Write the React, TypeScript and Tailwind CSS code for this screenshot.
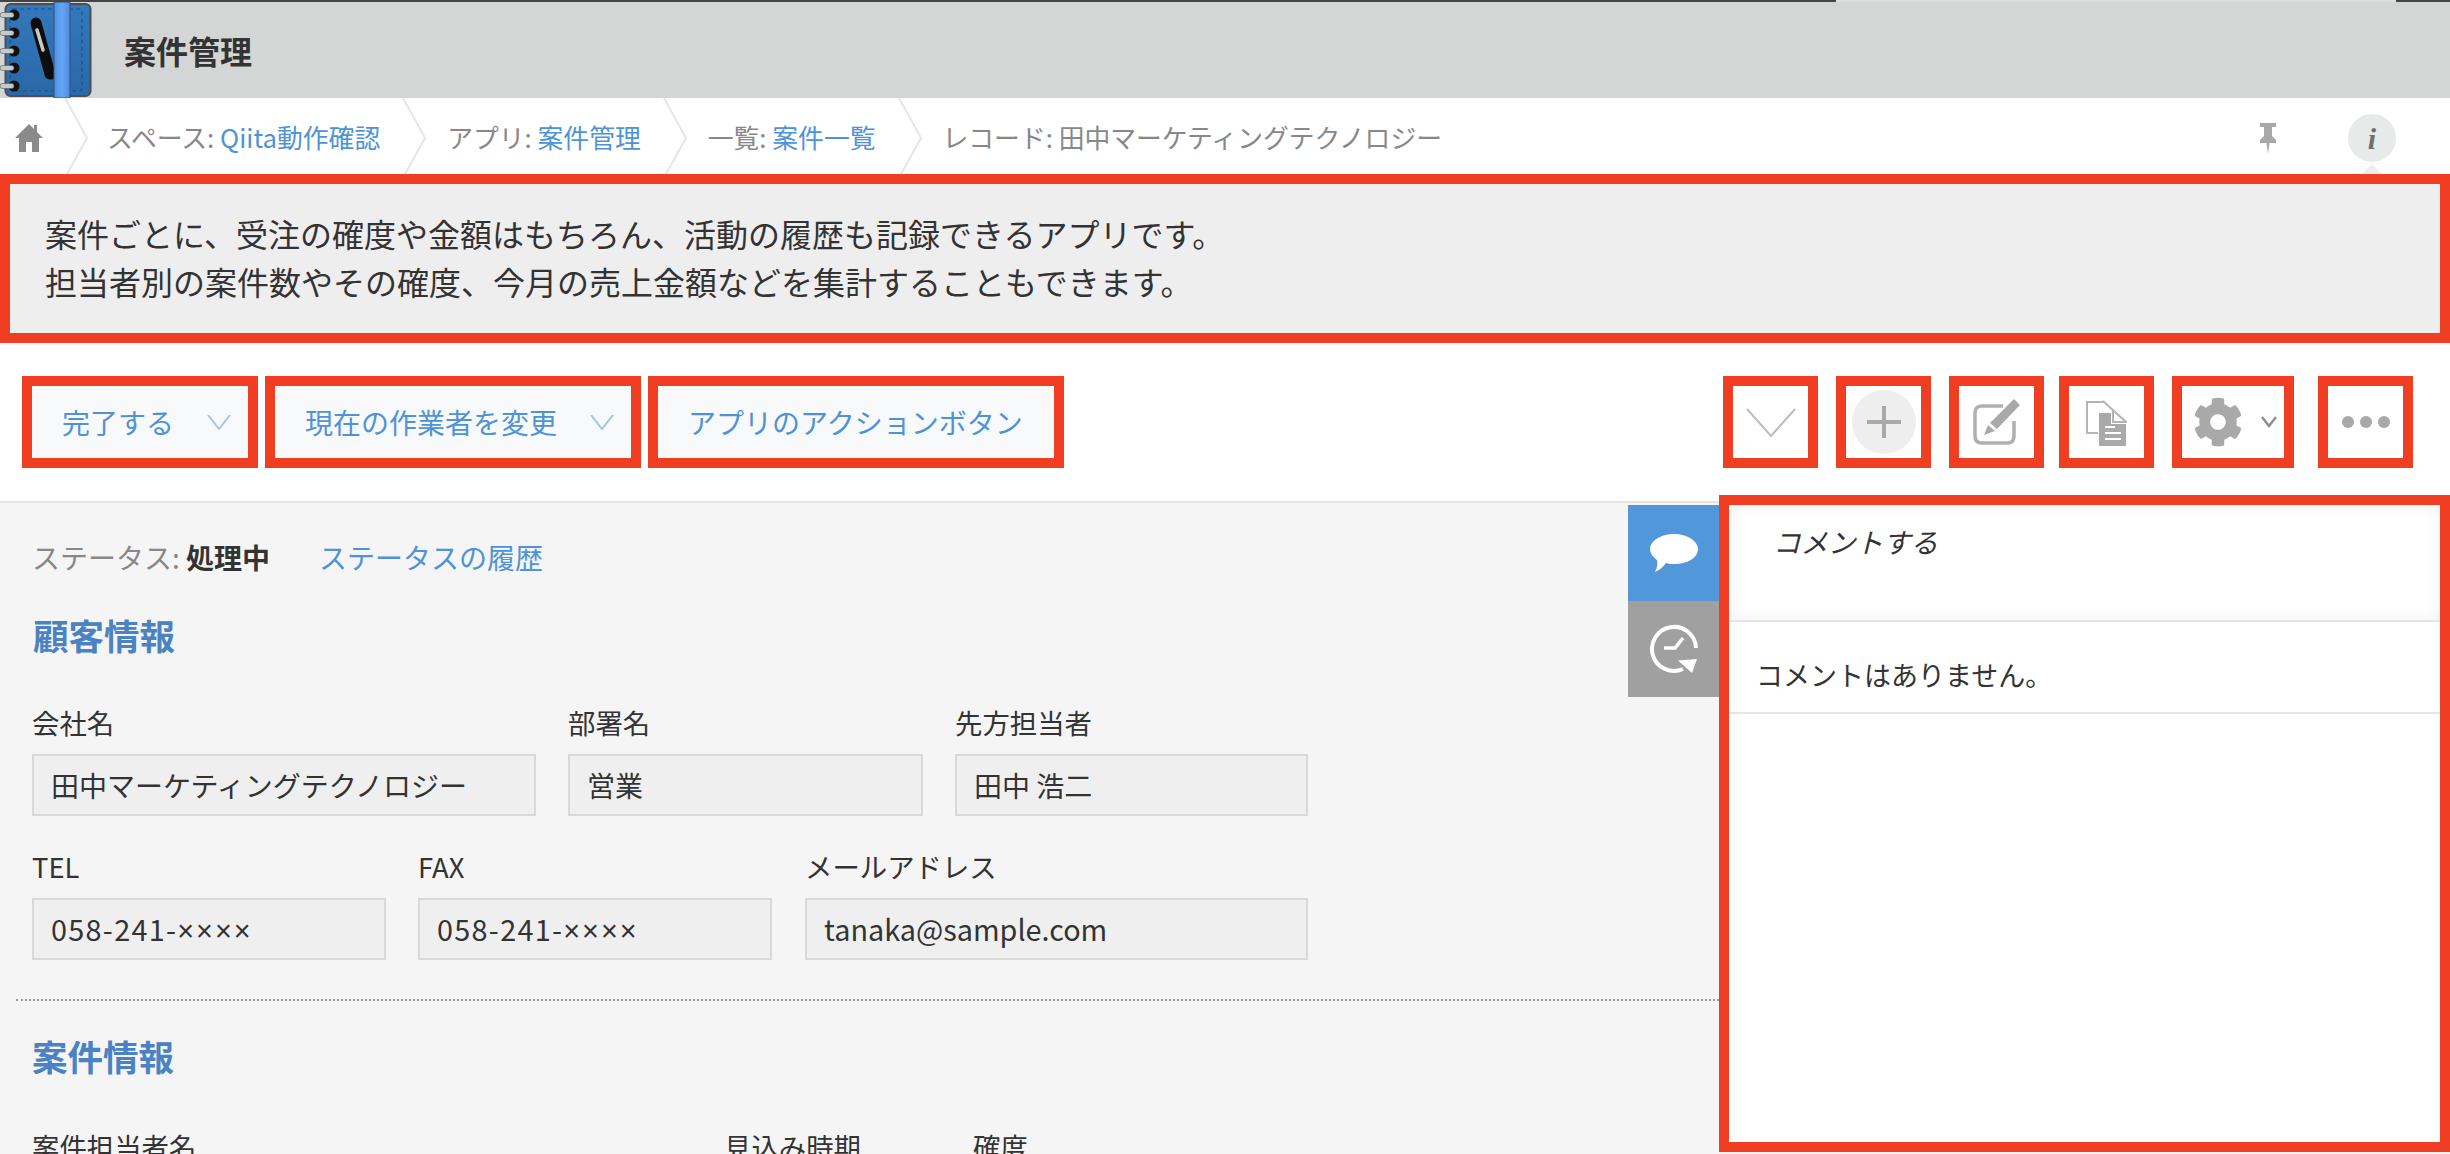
import React from "react";
import { FaCog } from "react-icons/fa";

// App logo: spiral notebook with a pen
const NotebookLogo = () => (
  <svg width="92" height="96" viewBox="0 0 92 96" className="shrink-0">
    <defs>
      <linearGradient id="cover" x1="0" y1="0" x2="0" y2="1">
        <stop offset="0" stopColor="#3379bd" />
        <stop offset="1" stopColor="#2a68a8" />
      </linearGradient>
      <linearGradient id="band" x1="0" y1="0" x2="1" y2="0">
        <stop offset="0" stopColor="#4b8fe6" />
        <stop offset="0.5" stopColor="#67a6f5" />
        <stop offset="1" stopColor="#4b8ae0" />
      </linearGradient>
    </defs>
    <rect x="5.5" y="2" width="85" height="92" rx="5" fill="url(#cover)" stroke="#4a4f55" strokeWidth="2" />
    <rect x="10" y="7" width="72" height="82" rx="3" fill="none" stroke="#1d4f85" strokeWidth="1.2" strokeDasharray="4 3" />
    {[13, 31, 49, 66, 84].map((y) => (
      <g key={y}>
        <circle cx="14" cy={y} r="5.5" fill="#111" />
        <rect x="0" y={y - 2.5} width="14" height="5" rx="2.5" fill="#c7c9cc" stroke="#555" strokeWidth="0.6" />
      </g>
    ))}
    <path d="M36 21 L50 72" stroke="#0d0d0d" strokeWidth="11" strokeLinecap="round" />
    <path d="M37 28 L43 48" stroke="#c9c9c9" strokeWidth="3.5" strokeLinecap="round" />
    <path d="M49 72 L53 78 L54 70 Z" fill="#0d0d0d" />
    <rect x="54" y="0" width="16" height="96" fill="url(#band)" stroke="#3a4f70" strokeWidth="1" />
  </svg>
);

const HomeIcon = () => (
  <svg width="28" height="28" viewBox="0 0 28 28" fill="#8a8a8a">
    <path d="M14 0 L19 5 V1 H22 V8 L28 14 H24 V28 H17 V18 H11 V28 H4 V14 H0 Z" />
  </svg>
);

const Crumb = () => (
  <svg width="24" height="76" viewBox="0 0 24 76" className="mx-[22px] shrink-0" fill="none" stroke="#e4e6e7" strokeWidth="2">
    <path d="M1 0 L23 40 L3 76" />
  </svg>
);

const PinIcon = () => (
  <svg width="16" height="31" viewBox="0 0 16 31" fill="#a8a8a8">
    <path d="M0 0 H16 V4 H12 V13 L16 17 V20 H9.5 L8 31 L6.5 20 H0 V17 L4 13 V4 H0 Z" />
  </svg>
);

const Chevron = ({ className }: { className: string }) => (
  <svg viewBox="0 0 24 15" width="24" height="15" fill="none" strokeWidth="2" className={className}>
    <path d="M1 0 L12 14 L23 0" />
  </svg>
);

const EditIcon = () => (
  <svg width="48" height="47" viewBox="0 0 48 47" fill="none">
    <path d="M30 7 H9 Q2 7 2 14 V37 Q2 44 9 44 H34 Q41 44 41 37 V22" stroke="#b0b0b0" strokeWidth="3.5" />
    <path d="M41 0 L47 6 L24 30 L17 24 Z" fill="#a9a9a9" />
    <path d="M15 26 L22 32 L11 36 Z" fill="#a9a9a9" />
  </svg>
);

const DocIcon = () => (
  <svg width="41" height="47" viewBox="0 0 41 47" fill="none">
    <path d="M17 3 H1 V34 H12" stroke="#b4b4b4" strokeWidth="2" />
    <path d="M17 2 L40 23 H27 V10" stroke="#b4b4b4" strokeWidth="2" />
    <path d="M13 14 H25 V25 H40 V47 H13 Z" fill="#a9a9a9" />
    <path d="M19 28 H29 M19 34 H35 M19 40 H35" stroke="#fff" strokeWidth="2" />
  </svg>
);

const BubbleIcon = () => (
  <svg width="48" height="38" viewBox="0 0 48 38" fill="#fff">
    <path d="M24 0 C37 0 48 7 48 15 C48 24 37 30 24 30 C21 30 19 30 16 29 C13 33 10 36 5 38 C7 34 8 30 7 26 C3 23 0 19 0 15 C0 7 11 0 24 0 Z" />
  </svg>
);

const HistoryIcon = () => (
  <svg width="48" height="50" viewBox="0 0 48 50" fill="none" stroke="#fff">
    <path d="M33 45 A22 22 0 1 1 46 24" strokeWidth="4" />
    <path d="M28 36.5 L47 35 L42 49 Z" fill="#fff" stroke="none" />
    <path d="M14 24 H25 L33 14" strokeWidth="3.5" />
  </svg>
);

const FormField = ({ label, width, className = "", valueClass = "text-[28px]", children }: { label: string; width: string; className?: string; valueClass?: string; children: React.ReactNode }) => (
  <div className={`${width} ${className} shrink-0`}>
    <div className="text-[27.4px] leading-[40px] text-[#333]">{label}</div>
    <div className={`mt-[12px] h-[62px] border-2 border-[#d9d9d9] bg-[#efefef] pl-[17px] leading-[58px] text-[#333] ${valueClass}`}>
      {children}
    </div>
  </div>
);

// phone numbers are masked with multiplication signs
const Phone = () => (
  <>
    <span className="tracking-[1.3px]">058-241-</span>
    <span className="font-['Liberation_Sans',sans-serif] tracking-[2px]">××××</span>
  </>
);

const ActionButton = ({ label, caret }: { label: string; caret?: boolean }) => (
  <div className="flex h-[92px] items-center border-10 border-[#ef3e22] bg-[#f7f9fb] text-[28px] text-[#4f93d6]">
    <span className="ml-[30px]">{label}</span>
    {caret ? <Chevron className="ml-[33px] mr-[17px] stroke-[#a3c6e8]" /> : <span className="mr-[31px]" />}
  </div>
);

const IconBox = ({ children, className = "" }: { children: React.ReactNode; className?: string }) => (
  <div className={`flex h-[92px] w-[95px] items-center justify-center border-10 border-[#ef3e22] bg-white ${className}`}>{children}</div>
);

const App = () => {
  return (
    <div className="flex h-[1154px] w-[2450px] flex-col overflow-hidden bg-[#f5f5f5] font-['Noto_Sans_CJK_JP','Noto_Sans',sans-serif]">
      {/* window strip */}
      <div className="flex h-[2px] shrink-0 bg-[#444]">
        <div className="ml-[1836px] w-[560px] bg-[#ddd]" />
      </div>
      {/* header */}
      <div className="flex h-[96px] shrink-0 items-center bg-[#d4d6d5]">
        <NotebookLogo />
        <h1 className="ml-[32px] text-[32px] font-bold text-[#333]">案件管理</h1>
      </div>
      {/* breadcrumb */}
      <div className="flex h-[76px] shrink-0 items-center bg-white text-[25.8px] text-[#888]">
        <div className="ml-[15px] mr-[-1px] mt-[4px]">
          <HomeIcon />
        </div>
        <Crumb />
        <span className="-ml-[3px] pt-[3px]">
          スペース: <a className="text-[#4f93d6]">Qiita動作確認</a>
        </span>
        <Crumb />
        <span className="-ml-px pt-[3px]">
          アプリ: <a className="text-[#4f93d6]">案件管理</a>
        </span>
        <Crumb />
        <span className="-ml-px pt-[3px]">
          一覧: <a className="text-[#4f93d6]">案件一覧</a>
        </span>
        <Crumb />
        <span className="-ml-px pt-[3px]">レコード: 田中マーケティングテクノロジー</span>
        <div className="ml-auto mr-[54px] mt-[4px] flex items-center">
          <PinIcon />
          <div className="relative ml-[72px] flex h-[48px] w-[48px] items-center justify-center rounded-full bg-[#e8e9e9] font-['Liberation_Serif',serif] text-[30px] font-bold italic text-[#6f6f6f]">
            i
            <div className="absolute left-[14px] top-[50px] h-0 w-0 border-x-[10px] border-b-[10px] border-x-transparent border-b-[#ecedee]" />
          </div>
        </div>
      </div>
      {/* app description */}
      <div className="h-[169px] shrink-0 border-10 border-[#ef3e22] bg-[#eeeeef] pl-[35px] pt-[25px] text-[32px] leading-[48px] text-[#333]">
        <p>案件ごとに、受注の確度や金額はもちろん、活動の履歴も記録できるアプリです。</p>
        <p>担当者別の案件数やその確度、今月の売上金額などを集計することもできます。</p>
      </div>
      {/* toolbar */}
      <div className="flex h-[160px] shrink-0 items-start border-b-2 border-[#e3e5e6] bg-white pt-[33px]">
        <div className="ml-[22px] flex gap-[7px]">
          <ActionButton label="完了する" caret />
          <ActionButton label="現在の作業者を変更" caret />
          <ActionButton label="アプリのアクションボタン" />
        </div>
        <div className="ml-auto mr-[37px] flex">
          <IconBox>
            <svg width="50" height="29" viewBox="0 0 50 29" fill="none" stroke="#bdbdbd" strokeWidth="2">
              <path d="M1 1 L25 28 L49 1" />
            </svg>
          </IconBox>
          <IconBox className="ml-[18px]">
            <div className="flex h-[64px] w-[64px] items-center justify-center rounded-full bg-[#eeeeee]">
              <svg width="34" height="32" viewBox="0 0 34 32" fill="none" stroke="#a9a9a9" strokeWidth="4">
                <path d="M0 16 H34 M17 0 V32" />
              </svg>
            </div>
          </IconBox>
          <IconBox className="ml-[18px]">
            <EditIcon />
          </IconBox>
          <IconBox className="ml-[15px]">
            <DocIcon />
          </IconBox>
          <IconBox className="ml-[18px] w-[122px] justify-start pl-[11px]">
            <FaCog size={50} color="#a9a9a9" />
            <svg width="16" height="12" viewBox="0 0 16 12" fill="none" stroke="#8f8f8f" strokeWidth="2.5" className="ml-[18px]">
              <path d="M1 1 L8 10 L15 1" />
            </svg>
          </IconBox>
          <IconBox className="ml-[24px] gap-[6px]">
            <span className="h-[12px] w-[12px] rounded-full bg-[#a9a9a9]" />
            <span className="h-[12px] w-[12px] rounded-full bg-[#a9a9a9]" />
            <span className="h-[12px] w-[12px] rounded-full bg-[#a9a9a9]" />
          </IconBox>
        </div>
      </div>
      {/* record body */}
      <div className="flex min-h-0 flex-1">
        <div className="relative w-[1719px] shrink-0">
          <div className="pl-[33px] pt-[34px]">
            <div className="-ml-px text-[28px] leading-[40px] text-[#888]">
              ステータス: <span className="font-bold text-[#333]">処理中</span>
              <a className="ml-[49px] text-[#4f93d6]">ステータスの履歴</a>
            </div>
            <h2 className="mt-[32px] text-[35.5px] font-bold leading-[52px] text-[#4a82c3]">顧客情報</h2>
            <div className="mt-[41px] flex">
              <FormField label="会社名" width="w-[504px]" className="-ml-px">田中マーケティングテクノロジー</FormField>
              <FormField label="部署名" width="w-[355px]" className="ml-[32px]">営業</FormField>
              <FormField label="先方担当者" width="w-[353px]" className="ml-[32px]">田中 浩二</FormField>
            </div>
            <div className="mt-[30px] flex">
              <FormField label="TEL" width="w-[354px]" className="-ml-px" valueClass="text-[28.8px]"><Phone /></FormField>
              <FormField label="FAX" width="w-[354px]" className="ml-[32px]" valueClass="text-[28.8px]"><Phone /></FormField>
              <FormField label="メールアドレス" width="w-[503px]" className="ml-[33px]" valueClass="text-[28.8px]">tanaka@sample.com</FormField>
            </div>
          </div>
          <div className="ml-[16px] mt-[39px] border-t-2 border-dotted border-[#999]" />
          <div className="pl-[32px]">
            <h2 className="mt-[29px] text-[35.5px] font-bold leading-[52px] text-[#4a82c3]">案件情報</h2>
            <div className="mt-[44px] flex text-[27.4px] leading-[40px] text-[#333]">
              <span className="w-[692px]">案件担当者名</span>
              <span className="w-[249px]">見込み時期</span>
              <span>確度</span>
            </div>
          </div>
          {/* side tabs */}
          <div className="absolute right-0 top-[2px] w-[91px]">
            <div className="flex h-[96px] items-center justify-center bg-[#5297da]">
              <BubbleIcon />
            </div>
            <div className="flex h-[96px] items-center justify-center bg-[#a0a0a0]">
              <HistoryIcon />
            </div>
          </div>
        </div>
        {/* comments */}
        <div className="relative -mt-[8px] h-[657px] w-[731px] shrink-0 border-10 border-[#ef3e22] bg-white">
          <div className="h-[117px] border-b-2 border-[#e3e5e6] pl-[44px] pt-[16px] text-[27.5px] italic leading-[40px] text-[#333] shadow-[inset_0_0_16px_#eff0f0]">
            コメントする
          </div>
          <div className="flex h-[92px] items-center border-b-2 border-[#e3e5e6] pl-[27px] pt-[16px] text-[27px] text-[#333]">
            コメントはありません。
          </div>
        </div>
      </div>
    </div>
  );
};

export default App;
